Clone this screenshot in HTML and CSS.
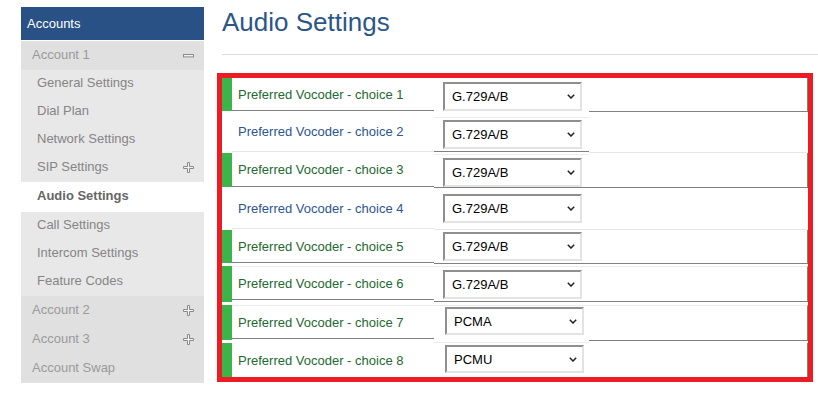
FILE: index.html
```html
<!DOCTYPE html>
<html lang="en">
<head>
<meta charset="utf-8">
<title>Audio Settings</title>
<link rel="stylesheet" href="styles.css">
</head>
<body>
<div class="page">
  <nav class="side">
    <div class="side-head">Accounts</div>
    <div class="acct">
      <span>Account 1</span>
      <svg class="ico" width="12" height="4" viewBox="0 0 12 4"><rect x="0.5" y="0.5" width="10" height="2.4" fill="#f4f4f4" stroke="#8a8a8a" stroke-width="1"/></svg>
    </div>
    <ul class="sub">
      <li class="sub-item">General Settings</li>
      <li class="sub-item">Dial Plan</li>
      <li class="sub-item">Network Settings</li>
      <li class="sub-item">SIP Settings
        <svg class="ico" width="12" height="12" viewBox="0 0 12 12"><path d="M4.5 0.5H6.5V4.5H10.5V6.5H6.5V10.5H4.5V6.5H0.5V4.5H4.5Z" fill="#f4f4f4" stroke="#8a8a8a" stroke-width="1"/></svg>
      </li>
    </ul>
    <div class="sub-current">Audio Settings</div>
    <ul class="sub">
      <li class="sub-item">Call Settings</li>
      <li class="sub-item">Intercom Settings</li>
      <li class="sub-item">Feature Codes</li>
    </ul>
    <div class="acct">
      <span>Account 2</span>
      <svg class="ico" width="12" height="12" viewBox="0 0 12 12"><path d="M4.5 0.5H6.5V4.5H10.5V6.5H6.5V10.5H4.5V6.5H0.5V4.5H4.5Z" fill="#f4f4f4" stroke="#8a8a8a" stroke-width="1"/></svg>
    </div>
    <div class="acct">
      <span>Account 3</span>
      <svg class="ico" width="12" height="12" viewBox="0 0 12 12"><path d="M4.5 0.5H6.5V4.5H10.5V6.5H6.5V10.5H4.5V6.5H0.5V4.5H4.5Z" fill="#f4f4f4" stroke="#8a8a8a" stroke-width="1"/></svg>
    </div>
    <div class="acct"><span>Account Swap</span></div>
  </nav>

  <main class="main">
    <h1 class="title">Audio Settings</h1>
    <div class="vocoders">
      <div class="vrow r1 on">
        <div class="mark"></div>
        <div class="label">Preferred Vocoder - choice 1</div>
        <div class="cell"><div class="sel"><span>G.729A/B</span><svg width="8" height="5" viewBox="0 0 8 5"><polyline points="0.8,0.8 4,4 7.2,0.8" fill="none" stroke="#222" stroke-width="1.5"/></svg></div></div>
        <div class="rest"></div>
      </div>
      <div class="vrow r2 off">
        <div class="mark"></div>
        <div class="label">Preferred Vocoder - choice 2</div>
        <div class="cell"><div class="sel"><span>G.729A/B</span><svg width="8" height="5" viewBox="0 0 8 5"><polyline points="0.8,0.8 4,4 7.2,0.8" fill="none" stroke="#222" stroke-width="1.5"/></svg></div></div>
        <div class="rest"></div>
      </div>
      <div class="vrow r3 on">
        <div class="mark"></div>
        <div class="label">Preferred Vocoder - choice 3</div>
        <div class="cell"><div class="sel"><span>G.729A/B</span><svg width="8" height="5" viewBox="0 0 8 5"><polyline points="0.8,0.8 4,4 7.2,0.8" fill="none" stroke="#222" stroke-width="1.5"/></svg></div></div>
        <div class="rest"></div>
      </div>
      <div class="vrow r4 off">
        <div class="mark"></div>
        <div class="label">Preferred Vocoder - choice 4</div>
        <div class="cell"><div class="sel"><span>G.729A/B</span><svg width="8" height="5" viewBox="0 0 8 5"><polyline points="0.8,0.8 4,4 7.2,0.8" fill="none" stroke="#222" stroke-width="1.5"/></svg></div></div>
        <div class="rest"></div>
      </div>
      <div class="vrow r5 on">
        <div class="mark"></div>
        <div class="label">Preferred Vocoder - choice 5</div>
        <div class="cell"><div class="sel"><span>G.729A/B</span><svg width="8" height="5" viewBox="0 0 8 5"><polyline points="0.8,0.8 4,4 7.2,0.8" fill="none" stroke="#222" stroke-width="1.5"/></svg></div></div>
        <div class="rest"></div>
      </div>
      <div class="vrow r6 on">
        <div class="mark"></div>
        <div class="label">Preferred Vocoder - choice 6</div>
        <div class="cell"><div class="sel"><span>G.729A/B</span><svg width="8" height="5" viewBox="0 0 8 5"><polyline points="0.8,0.8 4,4 7.2,0.8" fill="none" stroke="#222" stroke-width="1.5"/></svg></div></div>
        <div class="rest"></div>
      </div>
      <div class="vrow r7 on">
        <div class="mark"></div>
        <div class="label">Preferred Vocoder - choice 7</div>
        <div class="cell"><div class="sel pcm"><span>PCMA</span><svg width="8" height="5" viewBox="0 0 8 5"><polyline points="0.8,0.8 4,4 7.2,0.8" fill="none" stroke="#222" stroke-width="1.5"/></svg></div></div>
        <div class="rest"></div>
      </div>
      <div class="vrow r8 on">
        <div class="mark"></div>
        <div class="label">Preferred Vocoder - choice 8</div>
        <div class="cell"><div class="sel pcm"><span>PCMU</span><svg width="8" height="5" viewBox="0 0 8 5"><polyline points="0.8,0.8 4,4 7.2,0.8" fill="none" stroke="#222" stroke-width="1.5"/></svg></div></div>
        <div class="rest"></div>
      </div>
    </div>
  </main>
</div>
</body>
</html>
```
FILE: styles.css
```css
html, body {
  margin: 0;
  padding: 0;
  background: #ffffff;
}
body {
  font-family: "Liberation Sans", Arial, sans-serif;
  font-size: 13px;
}
.page {
  display: flex;
  align-items: flex-start;
}

/* ---------- sidebar ---------- */
.side {
  width: 183px;
  margin: 7px 0 0 21px;
  flex: none;
}
.side-head {
  height: 33px;
  line-height: 33px;
  background: #295185;
  color: #ffffff;
  padding-left: 6px;
  margin-bottom: 1px;
}
.acct {
  height: 29px;
  box-sizing: border-box;
  background: #e0e0e0;
  color: #9a9a9a;
  padding: 0 9px 2px 11px;
  display: flex;
  align-items: center;
  justify-content: space-between;
}
.sub {
  list-style: none;
  margin: 0;
  padding: 0;
  background: #e8e8e8;
}
.sub-item {
  height: 28px;
  box-sizing: border-box;
  padding: 0 9px 4px 16px;
  color: #858585;
  display: flex;
  align-items: center;
  justify-content: space-between;
}
.sub-item .ico {
  margin-top: 4px;
}
.sub-current {
  height: 30px;
  line-height: 27px;
  padding-left: 16px;
  background: #ffffff;
  color: #666666;
  font-weight: bold;
}
.ico {
  display: block;
  flex: none;
}
.acct .ico {
  margin-top: 2px;
}

/* ---------- main ---------- */
.main {
  flex: 1;
  margin-left: 13px;
}
.title {
  margin: 0 0 0 5px;
  box-sizing: border-box;
  height: 55px;
  padding-top: 7px;
  font-size: 26px;
  line-height: 30px;
  font-weight: normal;
  color: #2b5788;
  border-bottom: 1px solid #dedede;
}
.vocoders {
  margin-top: 18px;
  width: 586px;
  border: 5px solid #ed1c24;
}
.vrow {
  display: flex;
  align-items: flex-start;
}
.mark {
  width: 10px;
  flex: none;
}
.label {
  width: 202px;
  flex: none;
  box-sizing: border-box;
  padding-left: 6px;
  display: flex;
  align-items: center;
}
.cell {
  flex: none;
  width: 146px;
  padding-left: 9px;
}
.rest {
  flex: 1;
}
.on .mark {
  background: #3bb54a;
}
.on .label {
  color: #24692f;
}
.off .label {
  color: #2d5590;
}
.on .rest {
  border-right: 1px solid #5c9a64;
}

/* select box */
.sel {
  width: 139px;
  height: 29px;
  box-sizing: border-box;
  border-style: solid;
  border-width: 2px;
  border-color: #8f8f8f #e3e3e3 #e3e3e3 #8f8f8f;
  background: #ffffff;
  display: flex;
  align-items: center;
  justify-content: space-between;
  padding: 0 5px 0 7px;
  color: #000000;
}
.sel svg {
  display: block;
}
.sel.pcm {
  height: 28px;
  margin-left: 2px;
}

/* per-row line geometry */
.r1 .mark { height: 33px; }
.r1 .label, .r1 .rest { height: 33px; border-bottom: 1px solid #808080; }
.r1 .cell { padding-top: 4px; height: 30px; }

.r2 .label, .r2 .rest { height: 40px; border-bottom: 1px solid #e6e6e6; }
.r2 .cell { margin-top: 5px; border-top: 1px solid #ececec; padding-top: 2px; padding-bottom: 2px; border-bottom: 1px solid #808080; }

.r3 .mark { height: 34px; }
.r3 .label, .r3 .rest { height: 34px; border-bottom: 1px solid #808080; }
.r3 .cell { margin-top: 1px; border-top: 1px solid #ececec; padding-top: 3px; border-bottom: 1px solid #808080; }

.r4 .label, .r4 .rest { height: 41px; border-bottom: 1px solid #e6e6e6; }
.r4 .cell { padding-top: 6px; padding-bottom: 6px; border-bottom: 1px solid #e6e6e6; }

.r5 .mark { height: 33px; }
.r5 .label, .r5 .rest { height: 33px; border-bottom: 1px solid #808080; }
.r5 .cell { padding-top: 2px; padding-bottom: 2px; border-bottom: 1px solid #808080; }

.r6 .mark { margin-top: 2px; height: 36px; }
.r6 .label, .r6 .rest { margin-top: 2px; height: 34px; border-top: 1px solid #ececec; border-bottom: 1px solid #808080; }
.r6 .cell { margin-top: 2px; border-top: 1px solid #ececec; padding-top: 3px; padding-bottom: 2px; border-bottom: 1px solid #808080; }

.r7 .mark { margin-top: 3px; height: 35px; }
.r7 .label, .r7 .rest { margin-top: 3px; height: 34px; border-top: 1px solid #ececec; border-bottom: 1px solid #808080; }
.r7 .cell { margin-top: 3px; border-top: 1px solid #ececec; padding-top: 1px; padding-bottom: 6px; }

.r8 .mark { margin-top: 2px; height: 34px; }
.r8 .label, .r8 .rest { margin-top: 2px; height: 34px; }
.r8 .cell { margin-top: 1px; border-top: 1px solid #ececec; padding-top: 2px; padding-bottom: 4px; }
```
